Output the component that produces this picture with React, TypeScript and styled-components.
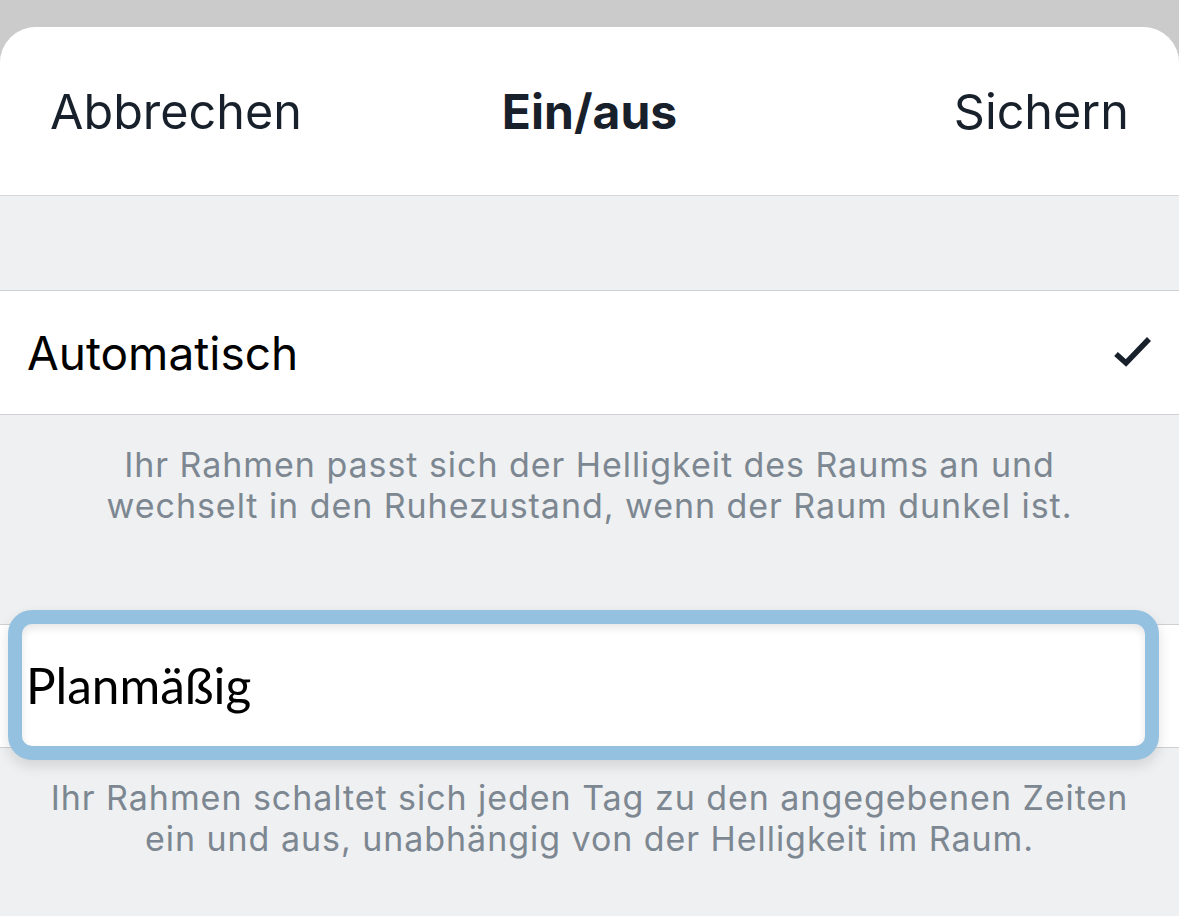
import styled, { createGlobalStyle } from "styled-components";

const GlobalStyle = createGlobalStyle`
  html, body {
    margin: 0;
    padding: 0;
    background: #cbcbcb;
  }
  body {
    font-family: Inter, "Liberation Sans", sans-serif;
    -webkit-font-smoothing: antialiased;
  }
`;

const Page = styled.div`
  width: 1179px;
  height: 916px;
  padding-top: 27px;
  box-sizing: border-box;
  overflow: hidden;
`;

const Sheet = styled.div`
  height: 100%;
  background: #eff0f2;
  border-radius: 36px 36px 0 0;
  overflow: hidden;
  display: flex;
  flex-direction: column;
`;

const Header = styled.div`
  height: 168px;
  background: #fff;
  border-bottom: 1px solid #d6d7da;
  display: grid;
  grid-template-columns: 1fr auto 1fr;
  align-items: center;
  padding: 0 50px;
  color: #18212b;
  font-size: 48.5px;
`;

const HeaderButton = styled.span<{ $align: "left" | "right" }>`
  justify-self: ${(p) => (p.$align === "left" ? "start" : "end")};
  padding-top: 2px;
`;

const Title = styled.span`
  font-weight: 700;
  font-size: 48px;
  padding-top: 2px;
`;

const Gap = styled.div`
  height: 95px;
`;

const Row = styled.div`
  position: relative;
  height: 123px;
  background: #fff;
  border-top: 1px solid #cfd0d4;
  border-bottom: 1px solid #cfd0d4;
  display: flex;
  align-items: center;
  justify-content: space-between;
  padding: 0 26px 0 27px;
  font-size: 46px;
  color: #000;
`;

const Check = styled.svg`
  width: 40px;
  height: 34px;
  margin-top: -4px;
`;

const Note = styled.p<{ $height: number }>`
  margin: 0;
  height: ${(p) => p.$height}px;
  padding-top: 29px;
  box-sizing: border-box;
  text-align: center;
  font-size: 34px;
  line-height: 41px;
  color: #7c8791;
  letter-spacing: 0.95px;
`;

const Focus = styled.div`
  position: absolute;
  left: 8px;
  right: 20px;
  top: -15px;
  bottom: -13px;
  border: 14px solid #95c1e0;
  border-radius: 24px;
  box-shadow: 0 6px 14px rgba(0, 0, 0, 0.12), inset 0 4px 8px rgba(0, 0, 0, 0.1);
  background: #fff;
  display: flex;
  align-items: center;
  padding-left: 4px;
  font-family: Lato, "Open Sans", sans-serif;
  font-size: 49.5px;
  color: #000;
`;

export default function App() {
  return (
    <Page>
      <GlobalStyle />
      <Sheet>
        <Header>
          <HeaderButton $align="left">Abbrechen</HeaderButton>
          <Title>Ein/aus</Title>
          <HeaderButton $align="right">Sichern</HeaderButton>
        </Header>
        <Gap />
        <Row>
          <span>Automatisch</span>
          <Check viewBox="0 0 40 34">
            <path d="M3 20 L13 29 L36 5" fill="none" stroke="#18212b" strokeWidth="5.5" />
          </Check>
        </Row>
        <Note $height={209}>
          Ihr Rahmen passt sich der Helligkeit des Raums an und
          <br />
          wechselt in den Ruhezustand, wenn der Raum dunkel ist.
        </Note>
        <Row>
          <Focus>Planmäßig</Focus>
        </Row>
        <Note $height={168}>
          Ihr Rahmen schaltet sich jeden Tag zu den angegebenen Zeiten
          <br />
          ein und aus, unabhängig von der Helligkeit im Raum.
        </Note>
      </Sheet>
    </Page>
  );
}
